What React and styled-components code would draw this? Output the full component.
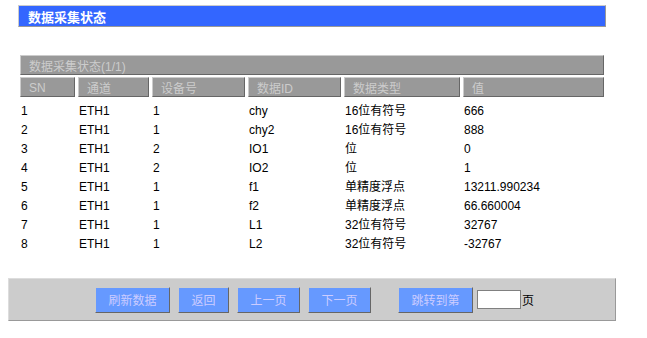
import React from "react";
import styled, { createGlobalStyle } from "styled-components";

const Global = createGlobalStyle`
  html, body { margin: 0; padding: 0; background: #ffffff; }
  body { font-family: "Liberation Sans", "Noto Sans CJK SC", sans-serif; font-size: 12px; color: #000; }
`;

const Page = styled.div`
  padding-top: 5px;
  width: 647px;
`;

const TitleBar = styled.div`
  box-sizing: border-box;
  margin-left: 18px;
  width: 588px;
  height: 22px;
  background: #3366ff;
  border: 1px solid;
  border-color: #cccccc #999999 #999999 #cccccc;
  display: flex;
  align-items: center;
  padding-left: 9px;
  color: #ffffff;
  font-weight: bold;
  font-size: 13px;
`;

const Table = styled.div`
  margin-top: 28px;
  margin-left: 20px;
  width: 584px;
`;

const Caption = styled.div`
  box-sizing: border-box;
  height: 20px;
  background: #999999;
  border: 1px solid;
  border-color: #cccccc #666666 #666666 #cccccc;
  color: #cccccc;
  display: flex;
  align-items: center;
  padding-left: 8px;
  padding-top: 1px;
  margin-bottom: 2px;
`;

const cols = "55px 71px 93px 93px 116px 141px";

const HeadRow = styled.div`
  display: grid;
  grid-template-columns: ${cols};
  column-gap: 3px;
  height: 20px;
  margin-bottom: 4px;
`;

const HeadCell = styled.div`
  box-sizing: border-box;
  background: #999999;
  border: 1px solid;
  border-color: #cccccc #666666 #666666 #cccccc;
  color: #cccccc;
  display: flex;
  align-items: center;
  padding-left: 8px;
  padding-top: 1px;
`;

const Row = styled.div`
  display: grid;
  grid-template-columns: ${cols};
  column-gap: 3px;
  height: 19px;
  line-height: 19px;
  padding-top: 1px;
  margin-bottom: -1px;
`;

const Cell = styled.div`
  padding-left: 1px;
  white-space: nowrap;
`;

const Footer = styled.div`
  box-sizing: border-box;
  margin-top: 25px;
  margin-left: 8px;
  width: 608px;
  height: 43px;
  background: #cccccc;
  border: 1px solid;
  border-color: #dddddd #999999 #999999 #dddddd;
  display: flex;
  justify-content: center;
  align-items: center;
  padding-left: 5px;
`;

const Button = styled.button`
  box-sizing: border-box;
  height: 26px;
  padding: 0 12.5px;
  margin-left: ${(p) => p.$gap}px;
  background: #6699ff;
  border: 1px solid;
  border-color: #cccccc #666666 #666666 #cccccc;
  color: #ccccff;
  font-family: "Liberation Sans", "Noto Sans CJK SC", sans-serif;
  font-size: 12px;
`;

const PageInput = styled.input`
  box-sizing: border-box;
  width: 44px;
  height: 19px;
  margin-left: 4px;
  border: 1px solid #808080;
  background: #ffffff;
  padding: 0;
`;

const PageLabel = styled.span`
  margin-left: 1px;
  color: #000;
  font-size: 12px;
`;

const headers = ["SN", "通道", "设备号", "数据ID", "数据类型", "值"];
const rows = [
  ["1", "ETH1", "1", "chy", "16位有符号", "666"],
  ["2", "ETH1", "1", "chy2", "16位有符号", "888"],
  ["3", "ETH1", "2", "IO1", "位", "0"],
  ["4", "ETH1", "2", "IO2", "位", "1"],
  ["5", "ETH1", "1", "f1", "单精度浮点", "13211.990234"],
  ["6", "ETH1", "1", "f2", "单精度浮点", "66.660004"],
  ["7", "ETH1", "1", "L1", "32位有符号", "32767"],
  ["8", "ETH1", "1", "L2", "32位有符号", "-32767"],
];

export default function App() {
  return (
    <Page>
      <Global />
      <TitleBar>数据采集状态</TitleBar>
      <Table>
        <Caption>数据采集状态(1/1)</Caption>
        <HeadRow>
          {headers.map((h) => (
            <HeadCell key={h}>{h}</HeadCell>
          ))}
        </HeadRow>
        {rows.map((r) => (
          <Row key={r[0]}>
            {r.map((c, i) => (
              <Cell key={i}>{c}</Cell>
            ))}
          </Row>
        ))}
      </Table>
      <Footer>
        <Button $gap={0}>刷新数据</Button>
        <Button $gap={8}>返回</Button>
        <Button $gap={8}>上一页</Button>
        <Button $gap={8}>下一页</Button>
        <Button $gap={27}>跳转到第</Button>
        <PageInput type="text" />
        <PageLabel>页</PageLabel>
      </Footer>
    </Page>
  );
}
